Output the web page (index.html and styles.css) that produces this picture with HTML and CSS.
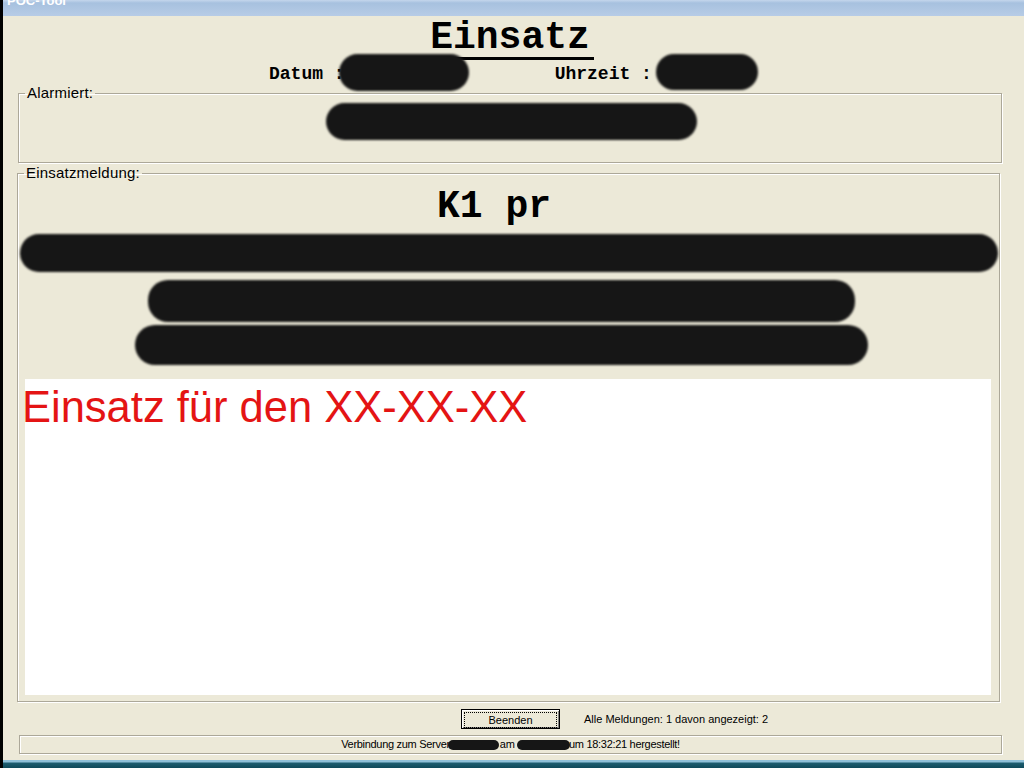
FILE: index.html
```html
<!DOCTYPE html>
<html>
<head>
  <title>POC-Tool</title>
  <link rel="stylesheet" href="styles.css">
</head>
<body>

<div class="window">
  <!-- Title bar (cut off at top of the screen) -->
  <div class="titlebar"><span class="title">POC-Tool</span></div>

  <div class="client">
    <div class="heading"><h1>Einsatz</h1></div>

    <div class="daterow">
      <span class="dlabel">Datum :</span><span class="blob blob-date"></span>
      <span class="dlabel tlabel">Uhrzeit :</span><span class="blob blob-time"></span>
    </div>

    <fieldset class="group group-alarm">
      <legend>Alarmiert:</legend>
      <div class="blob blob-alarm"></div>
    </fieldset>

    <fieldset class="group group-msg">
      <legend>Einsatzmeldung:</legend>
      <div class="keyword">K1 pr</div>
      <div class="blob blob-l1"></div>
      <div class="blob blob-l2"></div>
      <div class="blob blob-l3"></div>
      <div class="memo">Einsatz für den XX-XX-XX</div>
    </fieldset>

    <div class="actions">
      <button class="btn"><span class="btn-focus">Beenden</span></button>
      <span class="count">Alle Meldungen: 1 davon angezeigt: 2</span>
    </div>

    <div class="statusbar">Verbindung zum Server<span class="sblob sblob-1"></span>am <span class="sblob sblob-2"></span> um 18:32:21 hergestellt!</div>
  </div>

  <div class="taskline"></div>
</div>

</body>
</html>
```

FILE: styles.css
```css
body {
  margin: 0;
  width: 1024px;
  height: 768px;
  overflow: hidden;
  background: #ECE9D8;
  font-family: "Liberation Sans", Arial, sans-serif;
  color: #000;
}

.window {
  display: flex;
  flex-direction: column;
  height: 768px;
  border-left: 3px solid #000;
}

/* Title bar */
.titlebar {
  height: 16px;
  overflow: hidden;
  background: linear-gradient(to bottom, #c4d6ec 0, #a7c1df 3px, #b7cce6 16px);
}

.title {
  display: block;
  margin-top: -7px;
  padding-left: 4px;
  font-size: 13px;
  font-weight: bold;
  line-height: 16px;
  color: #fff;
}

.client {
  display: flex;
  flex-direction: column;
}

/* Heading */
.heading {
  height: 46px;
  text-align: center;
}

.heading h1 {
  display: inline-block;
  margin: 2px 0 0 -7px;
  padding: 0 4px;
  font-family: "Liberation Mono", "Courier New", monospace;
  font-size: 38px;
  font-weight: bold;
  line-height: 39px;
  border-bottom: 3px solid #000;
}

/* Date row */
.daterow {
  display: flex;
  align-items: center;
  height: 24px;
  padding-left: 266px;
}

.dlabel {
  font-family: "Liberation Mono", "Courier New", monospace;
  font-size: 18px;
  font-weight: bold;
  line-height: 24px;
  white-space: pre;
}

.tlabel {
  margin-left: 86px;
}

/* Redaction blobs */
.blob {
  display: block;
  flex-shrink: 0;
  background: #161616;
  border-radius: 20px;
  filter: blur(0.8px);
}

.blob-date {
  width: 130px;
  height: 37px;
  margin-left: -6px;
  margin-bottom: 4px;
}

.blob-time {
  width: 102px;
  height: 36px;
  margin-left: 4px;
  margin-bottom: 4px;
}

/* Group boxes */
.group {
  margin: 0;
  padding: 0;
  border: 1px solid #aca899;
  box-shadow: 1px 1px 0 #fff, inset 1px 1px 0 #fff;
  min-width: 0;
}

.group legend {
  margin-left: 6px;
  padding: 0 2px;
  font-size: 15px;
  line-height: 14px;
  letter-spacing: 0.2px;
}

.group-alarm {
  margin: 0 22px 0 15px;
  padding: 3px 0 22px;
}

.blob-alarm {
  width: 371px;
  height: 37px;
  margin: 0 auto;
  position: relative;
  left: 1px;
}

.group-msg {
  margin: 3px 24px 0 14px;
  padding: 4px 0 6px;
}

.keyword {
  padding-right: 29px;
  text-align: center;
  font-family: "Liberation Mono", "Courier New", monospace;
  font-size: 38px;
  font-weight: bold;
  line-height: 46px;
}

.blob-l1 {
  width: 978px;
  height: 38px;
  margin: 4px 0 0 2px;
}

.blob-l2 {
  width: 707px;
  height: 42px;
  margin: 8px 0 0 130px;
}

.blob-l3 {
  width: 733px;
  height: 40px;
  margin: 3px 0 0 117px;
}

.memo {
  width: 966px;
  height: 316px;
  margin: 14px 0 0 7px;
  padding-top: 4px;
  box-sizing: border-box;
  background: #fff;
  color: #e41414;
  font-size: 43.5px;
  line-height: 48px;
  white-space: nowrap;
  text-indent: -3px;
}

/* Button row */
.actions {
  display: flex;
  align-items: center;
  height: 33px;
  padding-left: 458px;
  box-sizing: border-box;
}

.btn {
  width: 99px;
  height: 20px;
  padding: 2px;
  background: #ECE9D8;
  border: 1px solid #000;
  box-shadow: inset 1px 1px 0 #fff, inset -1px -1px 0 #808080;
  font-family: "Liberation Sans", Arial, sans-serif;
  font-size: 11px;
  color: #000;
}

.btn-focus {
  display: block;
  height: 14px;
  line-height: 14px;
  border: 1px dotted #000;
}

.count {
  margin-left: 24px;
  font-size: 11px;
}

/* Status bar */
.statusbar {
  width: 983px;
  height: 19px;
  margin-left: 16px;
  box-sizing: border-box;
  border: 1px solid #aca899;
  box-shadow: inset 1px 1px 0 #fff, 1px 1px 0 #fff;
  text-align: center;
  font-size: 11px;
  line-height: 17px;
  letter-spacing: -0.3px;
  white-space: nowrap;
}

.sblob {
  display: inline-block;
  vertical-align: middle;
  height: 10px;
  background: #161616;
  border-radius: 6px;
  filter: blur(0.5px);
}

.sblob-1 {
  width: 51px;
  margin: 0 1px 0 -2px;
}

.sblob-2 {
  width: 53px;
  margin-right: -4px;
}

/* Bottom edge (taskbar) */
.taskline {
  margin-top: auto;
  height: 8px;
  background: linear-gradient(to bottom, #8fc0d8 0, #8fc0d8 2px, #1d5d70 3px, #0f4a5a 8px);
}
```
